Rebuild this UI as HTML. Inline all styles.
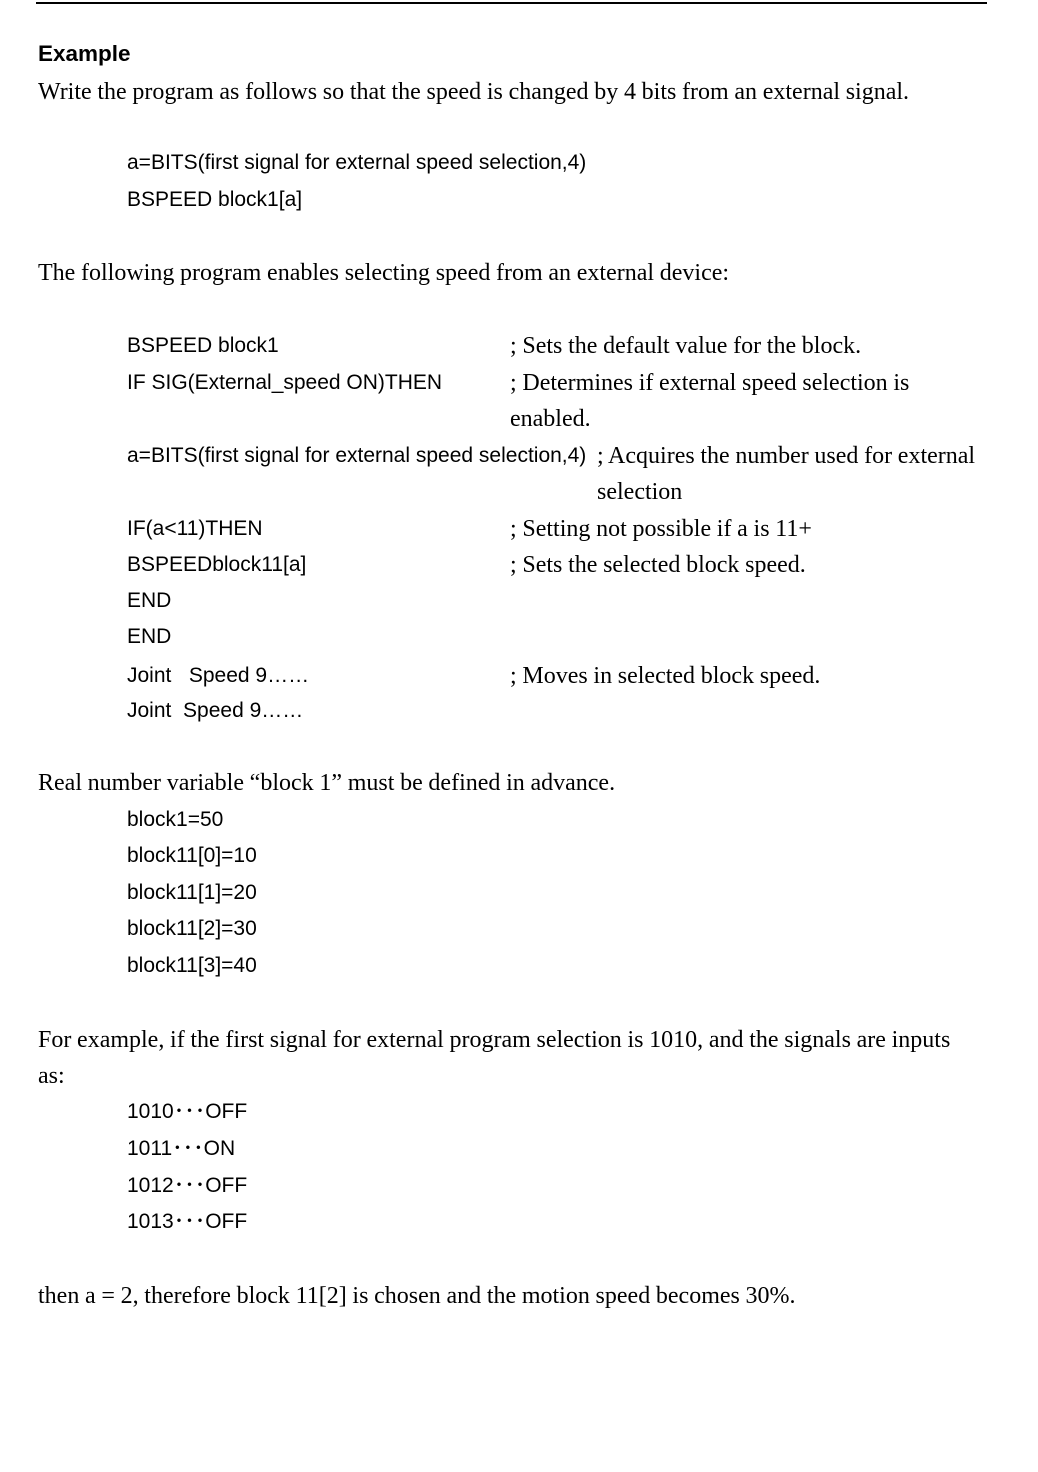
<!DOCTYPE html>
<html><head><meta charset="utf-8"><style>
html,body{margin:0;padding:0;background:#fff;}
body{width:1038px;height:1472px;position:relative;overflow:hidden;color:#000;}
.s{position:absolute;font-family:"Liberation Serif",serif;font-size:24px;line-height:30px;white-space:nowrap;letter-spacing:0;word-spacing:-0.3px;}
.c{position:absolute;font-family:"Liberation Sans",sans-serif;font-size:21px;line-height:30px;white-space:nowrap;letter-spacing:0;}
.hr{position:absolute;left:36px;top:2px;width:951px;height:2px;background:#000;}
</style></head><body>
<div class="hr"></div>
<div class="c" style="left:38px;top:39px;font-weight:bold;font-size:22.5px;">Example</div>
<div class="s" style="left:38px;top:77px;">Write the program as follows so that the speed is changed by 4 bits from an external signal.</div>
<div class="c" style="left:127px;top:148px;">a=BITS(first signal for external speed selection,4)</div>
<div class="c" style="left:127px;top:185px;">BSPEED block1[a]</div>
<div class="s" style="left:38px;top:258px;">The following program enables selecting speed from an external device:</div>
<div class="c" style="left:127px;top:331px;">BSPEED block1</div>
<div class="s" style="left:510px;top:331px;">; Sets the default value for the block.</div>
<div class="c" style="left:127px;top:368px;">IF SIG(External_speed ON)THEN</div>
<div class="s" style="left:510px;top:368px;">; Determines if external speed selection is</div>
<div class="s" style="left:510px;top:404px;">enabled.</div>
<div class="c" style="left:127px;top:441px;">a=BITS(first signal for external speed selection,4)</div>
<div class="s" style="left:597px;top:441px;">; Acquires the number used for external</div>
<div class="s" style="left:597px;top:477px;">selection</div>
<div class="c" style="left:127px;top:514px;">IF(a&lt;11)THEN</div>
<div class="s" style="left:510px;top:514px;">; Setting not possible if a is 11+</div>
<div class="c" style="left:127px;top:550px;">BSPEEDblock11[a]</div>
<div class="s" style="left:510px;top:550px;">; Sets the selected block speed.</div>
<div class="c" style="left:127px;top:586px;">END</div>
<div class="c" style="left:127px;top:622px;">END</div>
<div class="c" style="left:127px;top:661px;">Joint&nbsp;&nbsp;&nbsp;Speed 9……</div>
<div class="s" style="left:510px;top:661px;">; Moves in selected block speed.</div>
<div class="c" style="left:127px;top:696px;">Joint&nbsp;&nbsp;Speed 9……</div>
<div class="s" style="left:38px;top:768px;">Real number variable “block 1” must be defined in advance.</div>
<div class="c" style="left:127px;top:805px;">block1=50</div>
<div class="c" style="left:127px;top:841px;">block11[0]=10</div>
<div class="c" style="left:127px;top:878px;">block11[1]=20</div>
<div class="c" style="left:127px;top:914px;">block11[2]=30</div>
<div class="c" style="left:127px;top:951px;">block11[3]=40</div>
<div class="s" style="left:38px;top:1025px;">For example, if the first signal for external program selection is 1010, and the signals are inputs</div>
<div class="s" style="left:38px;top:1061px;">as:</div>
<div class="c" style="left:127px;top:1097px;">1010･･･OFF</div>
<div class="c" style="left:127px;top:1134px;">1011･･･ON</div>
<div class="c" style="left:127px;top:1171px;">1012･･･OFF</div>
<div class="c" style="left:127px;top:1207px;">1013･･･OFF</div>
<div class="s" style="left:38px;top:1281px;">then a = 2, therefore block 11[2] is chosen and the motion speed becomes 30%.</div>
</body></html>
